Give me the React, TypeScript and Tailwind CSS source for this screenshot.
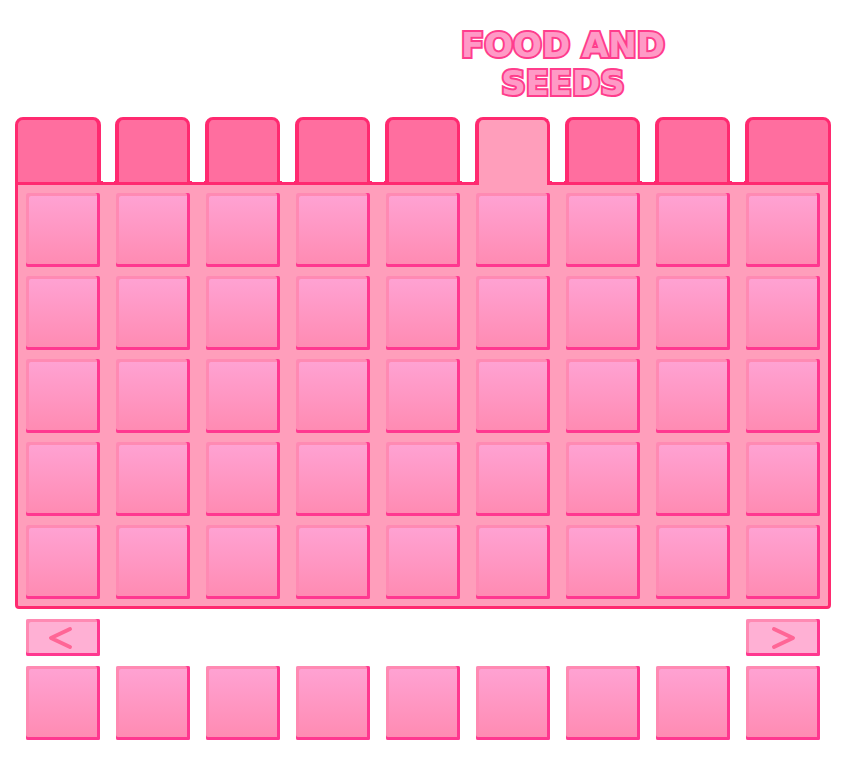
import { useState } from "react";

const COLUMNS = 9;
const ROWS = 5;

const range = (n: number) => Array.from({ length: n }, (_, i) => i);

const bevel =
  "rounded-[2px] shadow-[inset_-3px_0_0_#ff3890,inset_0_-3px_0_#ff3890,inset_3px_3px_0_#ff8ab3]";

function Slot({ label }: { label: string }) {
  return (
    <button
      type="button"
      aria-label={label}
      className={`h-[74px] bg-linear-to-b from-[#ffa3d4] to-[#ff8ab1] ${bevel}`}
    />
  );
}

function tabShape(index: number) {
  if (index === 0) return "-ml-[11px] -mr-px border-l-[3px] border-r-4";
  if (index === COLUMNS - 1) return "-ml-px -mr-[11px] border-l-4 border-r-[3px]";
  return "-ml-px border-l-4 border-r-[3px]";
}

// Small fillets where a tab's sides meet the panel's top edge.
function tabFeet(index: number, active: boolean) {
  const left =
    "before:absolute before:-left-[5px] before:size-px before:bg-[#ff2a70]";
  const right =
    "after:absolute after:h-px after:w-[2px] after:bg-[#ff2a70]";
  const leftDrop = active ? "before:bottom-[3px]" : "before:bottom-0";
  const rightDrop = active ? "after:bottom-[3px]" : "after:bottom-0";
  const rightSide = index === 0 ? "after:-right-[6px]" : "after:-right-[5px]";
  return `${index > 0 ? `${left} ${leftDrop}` : ""} ${
    index < COLUMNS - 1 ? `${right} ${rightDrop} ${rightSide}` : ""
  }`;
}

function Tab({ index, active, onSelect }: { index: number; active: boolean; onSelect: () => void }) {
  return (
    <button
      type="button"
      role="tab"
      aria-selected={active}
      aria-label={`Category ${index + 1}`}
      onClick={onSelect}
      className={`relative -mb-[3px] h-[68px] rounded-t-[8px] border-t-[3px] border-[#ff2a70] ${tabShape(index)} ${
        active ? "bg-[#ff9ebb]" : "border-b-[3px] bg-[#ff6e9f]"
      } ${tabFeet(index, active)}`}
    />
  );
}

function PageButton({ label, points }: { label: string; points: string }) {
  return (
    <button
      type="button"
      aria-label={label}
      className={`flex h-[37px] items-center justify-center bg-[#ffb0d4] ${bevel}`}
    >
      <svg viewBox="0 0 74 37" className="h-[37px] w-[74px]" aria-hidden="true">
        <polyline
          points={points}
          fill="none"
          stroke="#ff6696"
          strokeWidth="4"
          strokeLinecap="round"
          strokeLinejoin="round"
        />
      </svg>
    </button>
  );
}

export default function App() {
  const [active, setActive] = useState(5);

  return (
    <main className="bg-white px-[15px] pt-[26px] pb-11">
      <h1 className="ml-[50%] w-1/3 pl-2 text-center font-['DejaVu_Sans',sans-serif] text-[34px] leading-[38px] font-bold text-[#ff9ac6] [-webkit-text-stroke:4px_#ff3d8c] [paint-order:stroke_fill]">
        FOOD AND SEEDS
      </h1>

      <div role="tablist" className="relative mt-[15px] grid grid-cols-9 gap-x-4 px-[11px]">
        {range(COLUMNS).map((i) => (
          <Tab key={i} index={i} active={i === active} onSelect={() => setActive(i)} />
        ))}
      </div>

      <section className="grid grid-cols-9 gap-x-4 gap-y-[9px] rounded-b-[4px] border-[3px] border-[#ff2a70] bg-[#ff9ebb] px-2 pt-2 pb-[7px]">
        {range(ROWS * COLUMNS).map((i) => (
          <Slot key={i} label={`Item slot ${i + 1}`} />
        ))}
      </section>

      <nav className="mt-[10px] grid grid-cols-9 gap-x-4 px-[11px]">
        <PageButton label="Previous page" points="44,10 25,19 44,28" />
        <div className="col-span-7" />
        <PageButton label="Next page" points="28,10 47,19 28,28" />
      </nav>

      <section className="mt-[10px] grid grid-cols-9 gap-x-4 px-[11px]">
        {range(COLUMNS).map((i) => (
          <Slot key={i} label={`Hotbar slot ${i + 1}`} />
        ))}
      </section>
    </main>
  );
}
